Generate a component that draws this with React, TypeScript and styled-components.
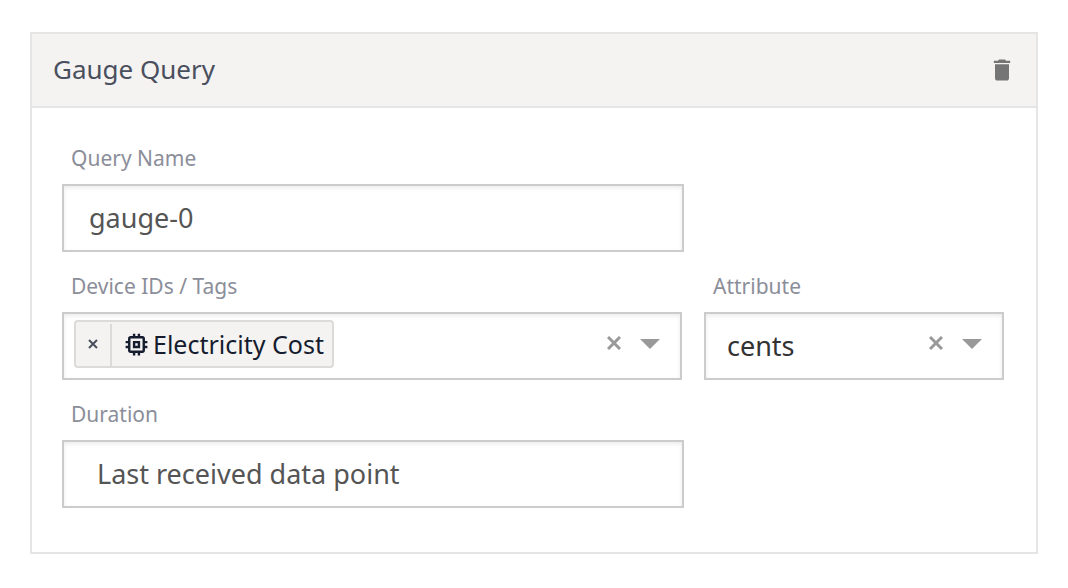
import React, { useState } from "react";
import styled, { createGlobalStyle } from "styled-components";

const GlobalStyle = createGlobalStyle`
  *, *::before, *::after { box-sizing: border-box; }
  body {
    margin: 0;
    background: #fff;
    color: #4a4f5e;
    font-family: "Noto Sans", "Open Sans", sans-serif;
  }
  button, input, select { font: inherit; color: inherit; letter-spacing: inherit; }
`;

const Page = styled.main`
  padding: 32px 30px 34px;
`;

const Card = styled.section`
  border: 2px solid #e5e5e5;
  background: #fff;
`;

const CardHeader = styled.header`
  display: flex;
  align-items: center;
  justify-content: space-between;
  height: 74px;
  padding: 0 20px 0 21px;
  border-bottom: 2px solid #e5e5e5;
  background: #f4f3f2;
`;

const Title = styled.h2`
  margin: 0;
  padding-bottom: 2px;
  font-size: 26px;
  font-weight: 400;
  line-height: 36px;
`;

const IconButton = styled.button<{ $color?: string }>`
  display: flex;
  flex: none;
  align-items: center;
  justify-content: center;
  padding: 0;
  border: 0;
  background: none;
  color: ${(p) => p.$color || "#999"};
  cursor: pointer;
`;

const ClearButton = styled(IconButton)`
  padding-bottom: 2px;
`;

const Body = styled.form`
  display: grid;
  grid-template-columns: 311fr 150fr;
  column-gap: 20px;
  row-gap: 20px;
  padding: 36px 32px 44px 30px;
`;

const Field = styled.div<{ $wide?: boolean }>`
  grid-column: ${(p) => (p.$wide ? "1" : "auto")};
  min-width: 0;
`;

const Label = styled.label`
  display: block;
  height: 40px;
  padding-left: 9px;
  color: #8b8e99;
  font-size: 21px;
  line-height: 28px;
`;

const controlFrame = `
  width: 100%;
  height: 68px;
  border: 2px solid #ccc;
  border-radius: 0;
  background: #fff;
  box-shadow: inset 0 2px 4px rgba(0, 0, 0, 0.08);
  outline: none;
`;

const TextInput = styled.input`
  ${controlFrame}
  padding: 0 25px 2px;
  color: #555;
  font-size: 27px;
`;

const PlainSelect = styled.select`
  ${controlFrame}
  appearance: none;
  padding: 0 33px 2px;
  color: #555;
  font-size: 27px;
`;

const SelectFrame = styled.div<{ $multi?: boolean }>`
  ${controlFrame}
  display: flex;
  align-items: center;
  width: auto;
  margin-right: ${(p) => (p.$multi ? "2px" : "0")};
  padding: 0 20px 4px ${(p) => (p.$multi ? "10px" : "21px")};
`;

const InnerSelect = styled.select`
  flex: 1;
  width: 0;
  min-width: 0;
  height: 60px;
  padding: 2px 0 0;
  border: 0;
  outline: none;
  appearance: none;
  background: transparent;
  color: #333;
  font-size: 27px;
`;

const Actions = styled.div`
  display: flex;
  align-items: center;
  gap: 19px;
`;

const Chip = styled.span`
  display: flex;
  flex: none;
  height: 48px;
  border: 2px solid #dcdbd9;
  border-radius: 4px;
  background: #f4f3f2;
  color: #151c2e;
`;

const ChipRemove = styled(IconButton)`
  width: 36px;
  margin-top: 2px;
  padding-bottom: 2px;
  border-right: 2px solid #dcdbd9;
`;

const ChipText = styled.span`
  display: flex;
  align-items: center;
  gap: 2px;
  padding: 0 8px 0 10px;
  font-size: 25px;
  line-height: 40px;
  white-space: nowrap;
`;

const TrashIcon = () => (
  <svg width="28" height="28" viewBox="0 0 24 24" fill="currentColor" aria-hidden="true">
    <path d="M6 19c0 1.1.9 2 2 2h8c1.1 0 2-.9 2-2V7H6v12zM19 4h-3.5l-1-1h-5l-1 1H5v2h14V4z" />
  </svg>
);

const MemoryIcon = () => (
  <svg width="29" height="29" viewBox="0 0 24 24" fill="currentColor" aria-hidden="true">
    <path d="M15 9H9v6h6V9zm-2 4h-2v-2h2v2zm8-2V9h-2V7c0-1.1-.9-2-2-2h-2V3h-2v2h-2V3H9v2H7c-1.1 0-2 .9-2 2v2H3v2h2v2H3v2h2v2c0 1.1.9 2 2 2h2v2h2v-2h2v2h2v-2h2c1.1 0 2-.9 2-2v-2h2v-2h-2v-2h2zm-4 6H7V7h10v10z" />
  </svg>
);

const CrossIcon = ({ size, stroke }: { size: number; stroke: number }) => (
  <svg width={size} height={size} viewBox={`0 0 ${size} ${size}`} aria-hidden="true">
    <path
      d={`M1 1L${size - 1} ${size - 1}M${size - 1} 1L1 ${size - 1}`}
      stroke="currentColor"
      strokeWidth={stroke}
    />
  </svg>
);

const ArrowIcon = () => (
  <svg width="20" height="10" viewBox="0 0 20 10" fill="#999" aria-hidden="true">
    <path d="M0 0h20L10 10z" />
  </svg>
);

export default function App() {
  const [name, setName] = useState("gauge-0");
  const [devices, setDevices] = useState(["Electricity Cost"]);
  const [attribute, setAttribute] = useState("cents");

  return (
    <>
      <GlobalStyle />
      <Page>
        <Card>
          <CardHeader>
            <Title>Gauge Query</Title>
            <IconButton type="button" $color="#757575" aria-label="Delete query">
              <TrashIcon />
            </IconButton>
          </CardHeader>
          <Body>
            <Field $wide>
              <Label htmlFor="query-name">Query Name</Label>
              <TextInput
                id="query-name"
                value={name}
                onChange={(e) => setName(e.target.value)}
              />
            </Field>
            <Field $wide>
              <Label htmlFor="devices">Device IDs / Tags</Label>
              <SelectFrame $multi>
                {devices.map((device) => (
                  <Chip key={device}>
                    <ChipRemove
                      type="button"
                      $color="#4a4f5e"
                      aria-label={`Remove ${device}`}
                      onClick={() => setDevices(devices.filter((d) => d !== device))}
                    >
                      <CrossIcon size={10} stroke={2} />
                    </ChipRemove>
                    <ChipText>
                      <MemoryIcon />
                      {device}
                    </ChipText>
                  </Chip>
                ))}
                <InnerSelect
                  id="devices"
                  value=""
                  onChange={(e) => setDevices([e.target.value])}
                >
                  <option value="" />
                  <option value="Electricity Cost">Electricity Cost</option>
                </InnerSelect>
                <Actions>
                  <ClearButton type="button" aria-label="Clear devices" onClick={() => setDevices([])}>
                    <CrossIcon size={14} stroke={3} />
                  </ClearButton>
                  <ArrowIcon />
                </Actions>
              </SelectFrame>
            </Field>
            <Field>
              <Label htmlFor="attribute">Attribute</Label>
              <SelectFrame>
                <InnerSelect
                  id="attribute"
                  value={attribute}
                  onChange={(e) => setAttribute(e.target.value)}
                >
                  <option value="" />
                  <option value="cents">cents</option>
                </InnerSelect>
                <Actions>
                  <ClearButton type="button" aria-label="Clear attribute" onClick={() => setAttribute("")}>
                    <CrossIcon size={14} stroke={3} />
                  </ClearButton>
                  <ArrowIcon />
                </Actions>
              </SelectFrame>
            </Field>
            <Field $wide>
              <Label htmlFor="duration">Duration</Label>
              <PlainSelect id="duration" defaultValue="last">
                <option value="last">Last received data point</option>
              </PlainSelect>
            </Field>
          </Body>
        </Card>
      </Page>
    </>
  );
}
